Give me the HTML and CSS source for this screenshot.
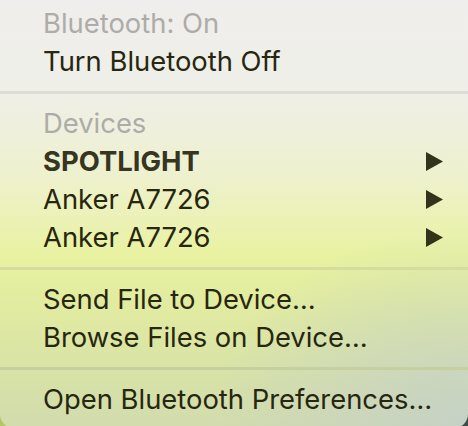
FILE: index.html
```html
<!DOCTYPE html>
<html lang="en">
<head>
    <meta charset="UTF-8">
    <meta name="viewport" content="width=device-width, initial-scale=1.0">
    <title>Bluetooth Menu</title>
    <link rel="stylesheet" href="styles.css">
</head>
<body>
    <div class="menu">
        <div class="item disabled">Bluetooth: On</div>
        <div class="item">Turn Bluetooth Off</div>
        <div class="separator"></div>
        <div class="item disabled">Devices</div>
        <div class="item bold">SPOTLIGHT
            <svg class="arrow" width="17" height="19" viewBox="0 0 17 19"><polygon points="0,0 17,9.5 0,19"/></svg>
        </div>
        <div class="item">Anker A7726
            <svg class="arrow" width="17" height="19" viewBox="0 0 17 19"><polygon points="0,0 17,9.5 0,19"/></svg>
        </div>
        <div class="item">Anker A7726
            <svg class="arrow" width="17" height="19" viewBox="0 0 17 19"><polygon points="0,0 17,9.5 0,19"/></svg>
        </div>
        <div class="separator sep-2"></div>
        <div class="item">Send File to Device…</div>
        <div class="item">Browse Files on Device…</div>
        <div class="separator sep-3"></div>
        <div class="item">Open Bluetooth Preferences…</div>
    </div>
</body>
</html>
```

FILE: styles.css
```css
body {
    margin: 0;
    height: 426px;
    overflow: hidden;
    background: linear-gradient(to right, #b4c860 0%, #7d8a55 60%, #3f4c46 100%);
}
.menu {
    height: 428px;
    box-sizing: border-box;
    padding-top: 4px;
    border-radius: 0 0 14px 14px;
    font-family: "Inter", "Liberation Sans", sans-serif;
    font-size: 27.4px;
    color: #27260f;
    background:
        radial-gradient(ellipse 260px 200px at 100% 100%, rgba(196, 208, 200, 0.9), rgba(196, 208, 200, 0) 100%),
        linear-gradient(to bottom, #efeeec 0%, #efefe8 22%, #eef1cc 42%, #e8f2a0 60%, #e2eca0 70%, #d6e1a8 90%, #d2dcae 100%);
}
.item {
    height: 38px;
    display: flex;
    align-items: center;
    justify-content: space-between;
    padding: 0 25px 0 43px;
}
.disabled {
    color: #adaca8;
}
.bold {
    font-weight: 700;
    color: #36351f;
}
.arrow {
    fill: #33321a;
}
.separator {
    height: 3px;
    margin: 11px 0 10px;
    background-color: #dcdbd6;
}
.sep-2 {
    background-color: #d6dc9e;
}
.sep-3 {
    background-color: #c6cfa0;
}
```
